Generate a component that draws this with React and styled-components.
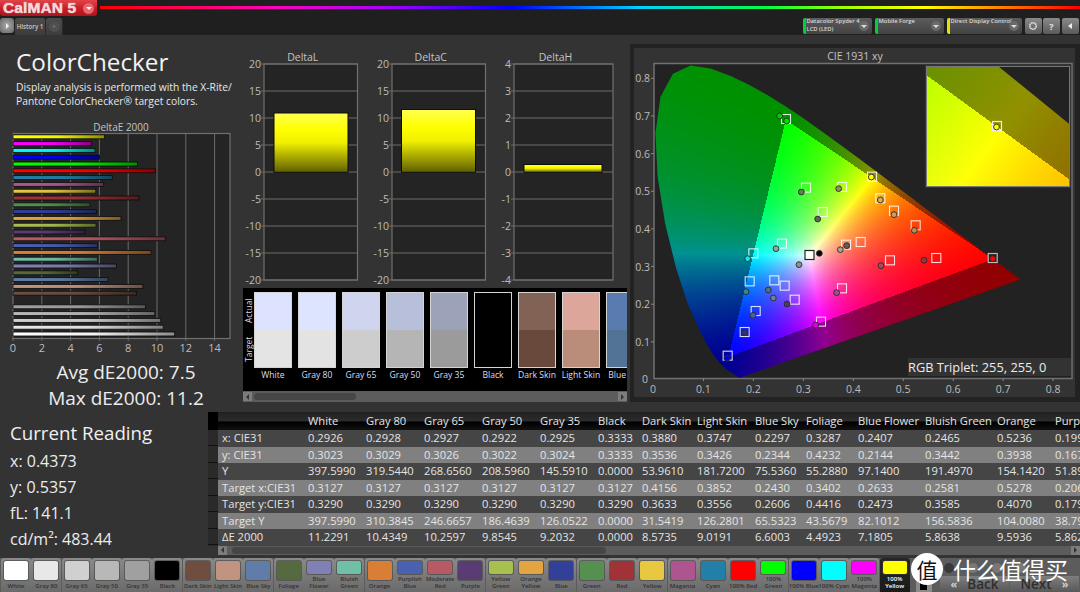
import React, { useEffect, useRef } from 'react';
import styled, { createGlobalStyle } from 'styled-components';

const Global = createGlobalStyle`
  html, body { margin: 0; padding: 0; background: #333; }
  body { font-family: "Open Sans", "Liberation Sans", sans-serif; }
  * { box-sizing: border-box; }
`;

const patches = [
  ['White', '#ffffff', 11.23], ['Gray 80', '#e8e8e8', 10.43], ['Gray 65', '#d0d0d0', 10.26], ['Gray 50', '#b8b8b8', 9.85], ['Gray 35', '#a0a0a0', 9.2],
  ['Black', '#000000', 0], ['Dark Skin', '#6f4e40', 8.57], ['Light Skin', '#c09480', 9.02], ['Blue Sky', '#5f7da8', 6.6], ['Foliage', '#556b3f', 4.49],
  ['Blue Flower', '#8080b5', 7.18], ['Bluish Green', '#70c0a8', 5.86], ['Orange', '#d87f35', 9.59], ['Purplish Blue', '#4a60b0', 5.86], ['Moderate Red', '#b85a65', 10.6],
  ['Purple', '#5a3c75', 5.0], ['Yellow Green', '#a8c050', 5.77], ['Orange Yellow', '#e2a53f', 7.5], ['Blue', '#32409a', 5.8], ['Green', '#559050', 5.35],
  ['Red', '#a03238', 8.75], ['Yellow', '#e8c840', 5.75], ['Magenta', '#ae5590', 6.3], ['Cyan', '#2280a8', 6.9], ['100% Red', '#ff0000', 9.9],
  ['100% Green', '#00ff00', 8.65], ['100% Blue', '#0000ff', 6.0], ['100% Cyan', '#00ffff', 5.7], ['100% Magenta', '#ff00ff', 5.45], ['100% Yellow', '#ffff00', 6.35],
];
const twoLine = new Set(['Blue Flower', 'Bluish Green', 'Purplish Blue', 'Moderate Red', 'Yellow Green', 'Orange Yellow', '100% Green', '100% Magenta', '100% Yellow']);

const swatches = [
  ['White', '#dde3ff', '#e4e4e4'], ['Gray 80', '#dde4ff', '#e3e3e3'], ['Gray 65', '#d0d5ef', '#cdcdcd'], ['Gray 50', '#b8bfda', '#b5b5b5'],
  ['Gray 35', '#9ca2b8', '#9b9b9b'], ['Black', '#000000', '#000000'], ['Dark Skin', '#826255', '#69493b'], ['Light Skin', '#dca79a', '#ba8c7a'], ['Blue Sky', '#5a7bb0', '#527396'],
];

const columns = [
  { w: 90, h: '', v: ['x: CIE31', 'y: CIE31', 'Y', 'Target x:CIE31', 'Target y:CIE31', 'Target Y', 'ΔE 2000'] },
  { w: 58, h: 'White', v: ['0.2926', '0.3023', '397.5990', '0.3127', '0.3290', '397.5990', '11.2291'] },
  { w: 58, h: 'Gray 80', v: ['0.2928', '0.3029', '319.5440', '0.3127', '0.3290', '310.3845', '10.4349'] },
  { w: 58, h: 'Gray 65', v: ['0.2927', '0.3026', '268.6560', '0.3127', '0.3290', '246.6657', '10.2597'] },
  { w: 58, h: 'Gray 50', v: ['0.2922', '0.3022', '208.5960', '0.3127', '0.3290', '186.4639', '9.8545'] },
  { w: 58, h: 'Gray 35', v: ['0.2925', '0.3024', '145.5910', '0.3127', '0.3290', '126.0522', '9.2032'] },
  { w: 44, h: 'Black', v: ['0.3333', '0.3333', '0.0000', '0.3127', '0.3290', '0.0000', '0.0000'] },
  { w: 55, h: 'Dark Skin', v: ['0.3880', '0.3536', '53.9610', '0.4156', '0.3633', '31.5419', '8.5735'] },
  { w: 58, h: 'Light Skin', v: ['0.3747', '0.3426', '181.7200', '0.3852', '0.3556', '126.2801', '9.0191'] },
  { w: 51, h: 'Blue Sky', v: ['0.2297', '0.2344', '75.5360', '0.2430', '0.2606', '65.5323', '6.6003'] },
  { w: 52, h: 'Foliage', v: ['0.3287', '0.4232', '55.2880', '0.3402', '0.4416', '43.5679', '4.4923'] },
  { w: 67, h: 'Blue Flower', v: ['0.2407', '0.2144', '97.1400', '0.2633', '0.2473', '82.1012', '7.1805'] },
  { w: 72, h: 'Bluish Green', v: ['0.2465', '0.3442', '191.4970', '0.2581', '0.3585', '156.5836', '5.8638'] },
  { w: 58, h: 'Orange', v: ['0.5236', '0.3938', '154.1420', '0.5278', '0.4070', '104.0080', '9.5936'] },
  { w: 60, h: 'Purple', v: ['0.1996', '0.1679', '51.8990', '0.2061', '0.1792', '38.7914', '5.8621'] },
];

const locus = [[.1741,.005],[.174,.005],[.1738,.0049],[.1736,.0049],[.1733,.0048],[.173,.0048],[.1726,.0048],[.1721,.0048],[.1714,.0051],[.1703,.0058],[.1689,.0069],[.1669,.0086],[.1644,.0109],[.1611,.0138],[.1566,.0177],[.151,.0227],[.144,.0297],[.1355,.0399],[.1241,.0578],[.1096,.0868],[.0913,.1327],[.0687,.2007],[.0454,.295],[.0235,.4127],[.0082,.5384],[.0039,.6548],[.0139,.7502],[.0389,.812],[.0743,.8338],[.1142,.8262],[.1547,.8059],[.1929,.7816],[.2296,.7543],[.2658,.7243],[.3016,.6923],[.3373,.6589],[.3731,.6245],[.4087,.5896],[.4441,.5547],[.4788,.5202],[.5125,.4866],[.5448,.4544],[.5752,.4242],[.6029,.3965],[.627,.3725],[.6482,.3514],[.6658,.334],[.6801,.3197],[.6915,.3083],[.7006,.2993],[.7079,.292],[.714,.2859],[.719,.2809],[.723,.277],[.726,.274],[.73,.27],[.7347,.2653]];

const PANEL_X = 634, PANEL_Y = 48;
const sx = (x) => 653.5 + x * 499.5;
const sy = (y) => 379.5 - y * 376.5;

function xyColor(x, y) {
  const X = x / y, Z = (1 - x - y) / y;
  let r = 2.4934969 * X - 0.9313836 - 0.4027108 * Z;
  let g = -0.829489 * X + 1.7626641 + 0.0236247 * Z;
  let b = 0.0358458 * X - 0.0761724 + 0.9568845 * Z;
  const outside = r < 0 || g < 0 || b < 0;
  r = Math.max(r, 0); g = Math.max(g, 0); b = Math.max(b, 0);
  const m = Math.max(r, g, b) || 1;
  const k = outside ? 0.57 : 1;
  const f = (v) => Math.round(255 * k * Math.pow(v / m, 1.2));
  return [f(r), f(g), f(b)];
}

function paintGamut(ctx, left, top, w, h, toX, toY, pathFn) {
  const off = document.createElement('canvas');
  off.width = w; off.height = h;
  const octx = off.getContext('2d');
  const img = octx.createImageData(w, h);
  for (let j = 0; j < h; j++) {
    for (let i = 0; i < w; i++) {
      const x = Math.max(toX(i + left + 0.5), 0.001);
      const y = Math.max(toY(j + top + 0.5), 0.001);
      const c = xyColor(x, y);
      const p = (j * w + i) * 4;
      img.data[p] = c[0]; img.data[p + 1] = c[1]; img.data[p + 2] = c[2]; img.data[p + 3] = 255;
    }
  }
  octx.putImageData(img, 0, 0);
  ctx.save();
  ctx.beginPath();
  ctx.rect(left, top, w, h);
  ctx.clip();
  ctx.beginPath();
  pathFn();
  ctx.closePath();
  ctx.clip();
  ctx.drawImage(off, left, top);
  ctx.restore();
}

function GamutCanvas() {
  const ref = useRef(null);
  useEffect(() => {
    const ctx = ref.current.getContext('2d');
    paintGamut(ctx, 20, 15, 418, 318, (px) => (px + PANEL_X - 653.5) / 499.5, (py) => (379.5 - py - PANEL_Y) / 376.5, () => {
      locus.forEach(([x, y], i) => {
        const a = sx(x) - PANEL_X, b = sy(y) - PANEL_Y;
        if (i) ctx.lineTo(a, b); else ctx.moveTo(a, b);
      });
    });
    // zoomed inset
    const ix = 927 - PANEL_X, iy = 67 - PANEL_Y, iw = 142, ih = 119;
    ctx.fillStyle = '#333';
    ctx.fillRect(ix - 2, iy - 2, iw + 4, ih + 4);
    ctx.strokeStyle = '#777';
    ctx.strokeRect(ix - 0.5, iy - 0.5, iw + 1, ih + 1);
    ctx.fillStyle = '#222';
    ctx.fillRect(ix, iy, iw, ih);
    const zx = 2980, zy = 2440, cx = 997.5 - PANEL_X, cy = 126 - PANEL_Y, x0 = 0.4365, y0 = 0.5375;
    paintGamut(ctx, ix, iy, iw, ih, (px) => x0 + (px - cx) / zx, (py) => y0 - (py - cy) / zy, () => {
      locus.forEach(([x, y], i) => {
        const a = cx + (x - x0) * zx, b = cy - (y - y0) * zy;
        if (i) ctx.lineTo(a, b); else ctx.moveTo(a, b);
      });
    });
  }, []);
  return <GamutLayer ref={ref} width={441} height={349} />;
}

const z5 = (x, y) => [630 + x / 3, 40 + y / 3];
const z6 = (x, y) => [630 + x / 3, 210 + y / 3];
const squares = [
  z5(468, 237), z5(528, 443), z5(636, 441), z5(726, 410), z5(751, 475), z5(792, 512), z5(578, 516),
  z6(919, 144), z6(780, 151), z6(692, 96), z6(648, 104), z6(636, 235), z6(573, 335), z6(494, 269), z6(464, 227), z6(433, 211),
  z6(359, 214), z6(377, 303), z6(344, 366), z6(293, 437), z6(370, 130), z6(456, 101), z6(857, 46),
];
const points = [
  [z5(449, 228), '#00d000'], [z5(470, 243), '#00e000'], [z5(514, 456), '#5f7f50'], [z5(626, 446), '#90905a'], [z5(724, 411), '#ffff00'], [z5(751, 480), '#dcae50'], [z6(792, 14), '#d0a050'], [z6(563, 27), '#606850'],
  [z6(1088, 146), '#ff0000'], [z6(882, 151), '#a03040'], [z6(753, 167), '#a05060'], [z6(650, 107), '#6a5a50'], [z6(631, 119), '#b0a090'], [z6(620, 248), '#a04f90'], [z6(557, 345), '#e000e0'],
  [z6(471, 282), '#503a60'], [z6(430, 264), '#6f7f9a'], [z6(415, 240), '#507090'], [z6(348, 245), '#308a90'], [z6(369, 316), '#4f5fa0'], [z6(344, 368), '#303080'], [z6(291, 445), '#0000e0'],
  [z6(353, 146), '#00f0f0'], [z6(438, 116), '#80b0a0'], [z6(507, 164), '#909090'], [z6(568, 130), '#000000'], [z6(853, 61), '#b89050'],
];

const Page = styled.div`
  position: relative;
  width: 1080px;
  height: 592px;
  overflow: hidden;
  display: flex;
  flex-direction: column;
  background: #333;
  color: #e6e6e6;
`;
const TopBar = styled.header`
  height: 35px;
  flex: none;
  background: #1f1f1f;
  display: flex;
  flex-direction: column;
`;
const LogoRow = styled.div`
  height: 18px;
  display: flex;
  align-items: flex-start;
`;
const Logo = styled.div`
  width: 97px;
  height: 16px;
  background: linear-gradient(#e2444a, #c81d25 55%, #a8161c);
  border-radius: 0 0 3px 3px;
  display: flex;
  align-items: center;
  padding-left: 3px;
  justify-content: space-between;
  padding-right: 3px;
`;
const LogoText = styled.span`
  font-family: "Liberation Sans", sans-serif;
  font-weight: 700;
  font-size: 15.5px;
  line-height: 16px;
  letter-spacing: 0.1px;
  color: #f0d8d8;
  text-shadow: 0 0 1px #fff;
`;
const LogoArrow = styled.span`
  width: 11px;
  height: 11px;
  border-radius: 50%;
  background: #e8656a;
  display: flex;
  align-items: center;
  justify-content: center;
  &::after {
    content: "";
    border: 3px solid transparent;
    border-top: 3px solid #fff;
    margin-top: 3px;
  }
`;
const Rainbow = styled.div`
  flex: 1;
  height: 3px;
  margin: 6px 0 0 3px;
  background: linear-gradient(90deg, #ff0000 0%, #ff00c0 18%, #a000ff 30%, #0000ff 42%, #00d0ff 55%, #00ff40 68%, #a0ff00 76%, #ffff00 84%, #ff8000 92%, #ff0000 100%);
`;
const ToolRow = styled.div`
  height: 17px;
  display: flex;
  align-items: flex-start;
`;
const PlayBtn = styled.div`
  width: 14px;
  height: 15px;
  border-radius: 3px;
  background: radial-gradient(circle, #aaa, #666);
  display: flex;
  align-items: center;
  justify-content: center;
  &::after {
    content: "";
    border: 3px solid transparent;
    border-left: 3px solid #eee;
    margin-left: 3px;
  }
`;
const Tab = styled.div`
  height: 17px;
  width: ${(p) => p.$w}px;
  background: linear-gradient(#4c4c4c, #3c3c3c);
  border-radius: 3px 3px 0 0;
  border-right: 1px solid #2a2a2a;
  margin-left: ${(p) => p.$ml || 0}px;
  font-size: 6.2px;
  line-height: 17px;
  font-weight: 600;
  color: #c8c8c8;
  text-align: center;
`;
const Plus = styled.span`
  display: inline-block;
  width: 11px;
  height: 11px;
  margin-top: 3px;
  border-radius: 50%;
  background: #4f4f4f;
  line-height: 11px;
  color: #888;
`;
const Spacer = styled.div`
  flex: 1;
`;
const Selector = styled.div`
  width: ${(p) => p.$w}px;
  height: 16px;
  margin-right: 3px;
  border-radius: 2px;
  background: linear-gradient(#5c5c5c, #434343);
  border-left: 3px solid ${(p) => p.$c};
  padding: 0 0 0 1px;
  font-size: 5.8px;
  font-weight: 600;
  line-height: 7.8px;
  color: #d8d8d8;
  position: relative;
  white-space: nowrap;
  &::after {
    content: "";
    position: absolute;
    right: 3px;
    top: 3px;
    width: 10px;
    height: 10px;
    border-radius: 50%;
    background: #6a6a6a;
  }
  &::before {
    content: "";
    position: absolute;
    right: 5px;
    top: 7px;
    z-index: 1;
    border: 3px solid transparent;
    border-top: 3px solid #ddd;
  }
`;
const IconBtn = styled.div`
  width: 17px;
  height: 16px;
  margin-right: 1.5px;
  border-radius: 2px;
  background: linear-gradient(#8a8a8a, #5a5a5a);
  display: flex;
  align-items: center;
  justify-content: center;
  font-size: 9px;
  font-weight: 700;
  color: #e4e4e4;
`;
const Main = styled.main`
  flex: 1;
  display: flex;
  flex-direction: column;
  min-height: 0;
`;
const Upper = styled.section`
  height: 375px;
  display: grid;
  grid-template-columns: 240px 390px 450px;
`;
const LeftCol = styled.div`
  padding-top: 12px;
`;
const Title = styled.h1`
  margin: 0 0 0 16px;
  height: 30px;
  font-size: 24.3px;
  line-height: 30px;
  font-weight: 400;
  color: #f2f2f2;
`;
const Desc = styled.p`
  margin: 3px 0 12px 16px;
  font-size: 10.3px;
  line-height: 14px;
  color: #e8e8e8;
  white-space: nowrap;
`;
const ChartSvg = styled.svg`
  display: block;
  font-family: "Open Sans", sans-serif;
  font-size: 11px;
  flex: none;
`;
const Stat = styled.div`
  padding-left: 12px;
  text-align: center;
  font-size: 19px;
  line-height: 26px;
  color: #ededed;
  &:first-of-type { margin-top: 5px; }
`;
const CenterCol = styled.div`
  padding-top: 13px;
  display: flex;
  flex-direction: column;
`;
const DeltaRow = styled.div`
  display: flex;
  height: 240px;
`;
const SwatchPanel = styled.div`
  margin-left: 3px;
  width: 384px;
  background: #000;
  display: flex;
  flex-direction: column;
`;
const SwatchRow = styled.div`
  height: 103px;
  display: flex;
  padding-top: 4px;
  overflow: hidden;
`;
const SideLabels = styled.div`
  width: 11px;
  flex: none;
  height: 76px;
  display: flex;
  flex-direction: column;
`;
const SideLabel = styled.span`
  height: 38px;
  writing-mode: vertical-rl;
  transform: rotate(180deg);
  text-align: center;
  font-size: 8.5px;
  line-height: 11px;
  color: #ddd;
`;
const Swatch = styled.div`
  flex: none;
  width: 38px;
  margin-right: 6px;
`;
const SwatchBox = styled.div`
  height: 76px;
  border: 1px solid #d4d4d4;
  display: flex;
  flex-direction: column;
`;
const SwatchHalf = styled.div`
  flex: 1;
  background: ${(p) => p.$c};
`;
const SwatchName = styled.div`
  margin: 2px -4px 0;
  text-align: center;
  font-size: 8.6px;
  line-height: 11px;
  color: #dde;
  white-space: nowrap;
`;
const ScrollBar = styled.div`
  height: ${(p) => p.$h}px;
  margin-left: ${(p) => p.$ml || 0}px;
  background: #5c5c5c;
  display: flex;
  align-items: center;
  justify-content: space-between;
  flex: none;
`;
const ScrollThumb = styled.div`
  width: ${(p) => p.$w}px;
  height: 7px;
  margin-left: ${(p) => p.$ml}px;
  margin-right: auto;
  border-radius: 4px;
  background: #464646;
`;
const ScrollArrow = styled.span`
  width: 9px;
  height: 9px;
  flex: none;
  background: #7c7c7c;
  display: flex;
  align-items: center;
  justify-content: center;
  &::after {
    content: "";
    border: 3px solid transparent;
    ${(p) => (p.$dir === 'left' ? 'border-right: 3px solid #333; margin-right: 3px;' : 'border-left: 3px solid #333; margin-left: 3px;')}
  }
`;
const RightCol = styled.div`
  padding-top: 9px;
`;
const CieOuter = styled.div`
  height: 358px;
  background: #222;
  padding: 4px 5px 5px 4px;
`;
const CieInner = styled.div`
  position: relative;
  width: 441px;
  height: 349px;
  background: #333;
`;
const GamutLayer = styled.canvas`
  position: absolute;
  left: 0;
  top: 0;
`;
const MarkerLayer = styled.svg`
  position: absolute;
  left: 0;
  top: 0;
`;
const Triplet = styled.div`
  position: absolute;
  left: 274px;
  top: 310px;
  width: 163px;
  height: 18px;
  padding-left: 0;
  background: #333;
  font-size: 12.8px;
  line-height: 18px;
  color: #ececec;
  white-space: nowrap;
`;
const Lower = styled.section`
  height: 145px;
  display: flex;
`;
const Readings = styled.div`
  width: 208px;
  flex: none;
  padding: 10px 0 0 10px;
`;
const ReadingTitle = styled.h2`
  margin: 0 0 2px;
  font-size: 18.7px;
  line-height: 26px;
  font-weight: 400;
  color: #f0f0f0;
`;
const ReadingLine = styled.div`
  font-size: 16px;
  line-height: 26px;
  color: #ececec;
`;
const TableWrap = styled.div`
  flex: 1;
  min-width: 0;
  padding-top: 2px;
  display: flex;
  flex-direction: column;
`;
const TableRow = styled.div`
  display: flex;
  height: 133.5px;
  flex: none;
`;
const Strip = styled.div`
  width: 10px;
  flex: none;
  background: repeating-linear-gradient(#2a2a2a 0, #2a2a2a 15.5px, #111 15.5px, #111 16.5px);
  border-top: 18px solid #000;
`;
const DataTable = styled.table`
  table-layout: fixed;
  width: 854px;
  border-collapse: collapse;
  font-size: 11.2px;
  line-height: 13px;
  color: #e4e4e4;
  height: 133.5px;
`;
const HeadCell = styled.th`
  height: 18px;
  padding: 0 0 1px ${(p) => (p.$first ? 4 : 0)}px;
  background: linear-gradient(#202020, #2c2c2c 50%, #000 55%, #111);
  font-weight: 400;
  text-align: left;
  white-space: nowrap;
  overflow: hidden;
`;
const DataRow = styled.tr`
  background: ${(p) => (p.$light ? '#808080' : '#454545')};
`;
const DataCell = styled.td`
  height: 16.5px;
  padding: 0 0 1px ${(p) => (p.$first ? 4 : 0)}px;
  white-space: nowrap;
  overflow: hidden;
`;
const BottomBar = styled.footer`
  height: 37px;
  flex: none;
  display: flex;
  background: #5c5c5c;
  border-top: 3px solid #333;
`;
const Tiles = styled.div`
  display: flex;
  padding-left: 1px;
  flex: none;
`;
const Tile = styled.div`
  width: 30px;
  margin-right: 0.3px;
  height: 34px;
  border-radius: 3px 3px 0 0;
  background: ${(p) => (p.$active ? 'linear-gradient(#262626, #1a1a1a)' : 'linear-gradient(#8a8a8a, #6a6a6a)')};
  display: flex;
  flex-direction: column;
  align-items: center;
  padding-top: 3px;
  overflow: hidden;
`;
const TileColor = styled.div`
  width: 24px;
  height: ${(p) => (p.$two ? 13 : 19)}px;
  flex: none;
  border-radius: 2px;
  background: ${(p) => p.$c};
  box-shadow: 0 0 0 1px rgba(60, 60, 60, 0.55);
`;
const TileName = styled.div`
  font-size: 6px;
  line-height: 7px;
  margin-top: ${(p) => (p.$two ? 2 : 3)}px;
  font-weight: 600;
  width: 29px;
  flex: none;
  text-align: center;
  white-space: ${(p) => (p.$two ? 'normal' : 'nowrap')};
  display: flex;
  justify-content: center;
  flex-wrap: ${(p) => (p.$two ? 'wrap' : 'nowrap')};
  color: ${(p) => (p.$active ? '#fff' : '#333')};
`;
const Controls = styled.div`
  flex: 1;
  display: flex;
  flex-direction: column;
  justify-content: flex-end;
`;
const MediaRow = styled.div`
  display: flex;
  align-items: center;
  gap: 14px;
  height: 14px;
  margin-bottom: 1px;
  padding-left: 34px;
`;
const MediaDot = styled.span`
  width: 10px;
  height: 10px;
  border-radius: 50%;
  background: #777;
  &:first-child { background: #3a3a3a; }
`;
const ControlRow = styled.div`
  display: flex;
  align-items: flex-end;
  height: 16px;
`;
const StopBtn = styled.div`
  width: 16px;
  height: 12px;
  margin: 0 8px 0 6px;
  border-radius: 3px 3px 0 0;
  background: #8a8a8a;
  display: flex;
  justify-content: center;
  padding-top: 3px;
  &::after {
    content: "";
    width: 7px;
    height: 7px;
    background: #000;
  }
`;
const NavBtn = styled.div`
  flex: 1;
  height: 16px;
  margin-right: 1px;
  background: linear-gradient(#7e7e7e, #585858);
  display: flex;
  align-items: center;
  justify-content: center;
  gap: 10px;
  font-size: 13.5px;
  font-weight: 600;
  color: #2e2e2e;
  line-height: 16px;
`;
const NavIcon = styled.span`
  font-size: 11px;
  color: #ccc;
  font-weight: 700;
`;
const Watermark = styled.div`
  position: absolute;
  left: 911px;
  top: 553px;
  display: flex;
  align-items: center;
  gap: 10px;
`;
const WatermarkMark = styled.div`
  width: 32px;
  height: 32px;
  border-radius: 50%;
  background: #fff;
  color: #111;
  display: flex;
  align-items: center;
  justify-content: center;
  font-family: "Noto Sans CJK SC", sans-serif;
  font-size: 21px;
  line-height: 32px;
`;
const WatermarkText = styled.div`
  font-family: "Noto Sans CJK SC", sans-serif;
  color: #fff;
  font-size: 23px;
  line-height: 32px;
  white-space: nowrap;
`;

function DeltaChart({ title, labels, px, pw, barX, barW, barTop, width, id }) {
  const top = 16, step = 27;
  const zero = top + step * 4 + 0.3;
  return (
    <ChartSvg width={width} height={240} viewBox={`0 0 ${width} 240`}>
      <defs>
        <linearGradient id={id} x1="0" y1="0" x2="0" y2="1">
          <stop offset="0" stopColor="#ffff50" />
          <stop offset="0.28" stopColor="#ffff00" />
          <stop offset="0.5" stopColor="#f0f000" />
          <stop offset="1" stopColor="#5e5e00" />
        </linearGradient>
      </defs>
      <text x={px + pw / 2 - 8} y={12.5} textAnchor="middle" fill="#c4c4c4" fontSize="10.5">{title}</text>
      <rect x={px} y={top} width={pw} height={216} fill="#242424" stroke="#707070" strokeWidth="1.2" />
      {labels.map((l, i) => (
        <g key={l}>
          <line x1={px - 3} x2={px + pw} y1={top + i * step} y2={top + i * step} stroke="#6c6c6c" strokeWidth="1" />
          <text x={px - 3} y={top + i * step + 4} textAnchor="end" fill="#bdbdbd" fontSize="10.5">{l}</text>
        </g>
      ))}
      <rect x={barX} y={barTop} width={barW} height={zero - barTop} fill={`url(#${id})`} stroke="#0c0c0c" strokeWidth="1" />
    </ChartSvg>
  );
}

function DeltaE() {
  const y0 = 13, x = (v) => 13 + v * 14.4;
  const rows = [...patches].reverse();
  return (
    <ChartSvg width={240} height={234} viewBox="0 120 240 234">
      <defs>
        <linearGradient id="barShade" x1="0" y1="0" x2="1" y2="0">
          <stop offset="0" stopColor="#000" stopOpacity="0" />
          <stop offset="0.5" stopColor="#000" stopOpacity="0.05" />
          <stop offset="1" stopColor="#000" stopOpacity="0.45" />
        </linearGradient>
      </defs>
      <text x={121} y={131} textAnchor="middle" fill="#c4c4c4" fontSize="10">DeltaE 2000</text>
      <rect x={13} y={133.5} width={217} height={205} fill="#242424" stroke="#707070" strokeWidth="1.2" />
      {[2, 4, 6, 8, 10, 12, 14].map((v) => (
        <line key={v} x1={x(v)} x2={x(v)} y1={133.5} y2={338.5} stroke="#6c6c6c" strokeWidth="1" />
      ))}
      {[0, 2, 4, 6, 8, 10, 12, 14].map((v) => (
        <g key={v}>
          <line x1={x(v)} x2={x(v)} y1={338.5} y2={341} stroke="#6c6c6c" />
          <text x={x(v)} y={352} textAnchor="middle" fill="#bdbdbd" fontSize="11">{v}</text>
        </g>
      ))}
      {rows.map(([name, c, de], i) =>
        de > 0 ? (
          <g key={name}>
            <rect x={y0} y={134.8 + i * 6.8} width={de * 14.4} height={4} fill={c} stroke="#111" strokeWidth="0.9" />
            <rect x={y0} y={134.8 + i * 6.8} width={de * 14.4} height={4} fill="url(#barShade)" />
          </g>
        ) : null
      )}
    </ChartSvg>
  );
}

function CieBase() {
  const xs = [0.1, 0.2, 0.3, 0.4, 0.5, 0.6, 0.7, 0.8];
  const ys = [0.1, 0.2, 0.3, 0.4, 0.5, 0.6, 0.7, 0.8];
  return (
    <ChartSvg width={441} height={349} viewBox={`${PANEL_X} ${PANEL_Y} 441 349`}>
      <text x={855} y={59.5} textAnchor="middle" fill="#c4c4c4" fontSize="10.5">CIE 1931 xy</text>
      <rect x={654} y={63.5} width={418} height={315} fill="#222" stroke="#707070" strokeWidth="1.5" />
      <text x={653} y={393} textAnchor="middle" fill="#bdbdbd" fontSize="10.5">0</text>
      <text x={648} y={383} textAnchor="end" fill="#bdbdbd" fontSize="10.5">0</text>
      {xs.map((v) => (
        <g key={v}>
          <line x1={sx(v)} x2={sx(v)} y1={378} y2={381} stroke="#888" />
          <text x={sx(v)} y={393} textAnchor="middle" fill="#bdbdbd" fontSize="10.5">{v}</text>
        </g>
      ))}
      {ys.map((v) => (
        <g key={v}>
          <line x1={651} x2={654} y1={sy(v)} y2={sy(v)} stroke="#888" />
          <text x={650} y={sy(v) + 4} textAnchor="end" fill="#bdbdbd" fontSize="10.5">{v}</text>
        </g>
      ))}
    </ChartSvg>
  );
}

function CieMarkers() {
  return (
    <MarkerLayer width={441} height={349} viewBox={`${PANEL_X} ${PANEL_Y} 441 349`}>
      {squares.map(([x, y], i) => (
        <rect key={i} x={x - 4.5} y={y - 4.5} width={9} height={9} fill="none" stroke="#fff" strokeOpacity="0.85" strokeWidth="1.1" />
      ))}
      <rect x={805} y={250.5} width={9} height={9} fill="#fff" stroke="#222" strokeWidth="1.2" />
      <rect x={992.5} y={121.5} width={9} height={9} fill="none" stroke="#eee" strokeWidth="1.2" />
      <rect x={988.2} y={253.5} width={9} height={9} fill="#222" stroke="#bbb" strokeWidth="1.2" />
      {points.map(([[x, y], c], i) => (
        <circle key={i} cx={x} cy={y} r={2.9} fill={c} stroke="#2a2a2a" strokeWidth="0.9" />
      ))}
      <circle cx={996.5} cy={127} r={2.9} fill="#ffff00" stroke="#2a2a2a" strokeWidth="0.9" />
    </MarkerLayer>
  );
}

export default function App() {
  return (
    <Page>
      <Global />
      <TopBar>
        <LogoRow>
          <Logo>
            <LogoText>CalMAN 5</LogoText>
            <LogoArrow />
          </Logo>
          <Rainbow />
        </LogoRow>
        <ToolRow>
          <PlayBtn />
          <Tab $w={31} $ml={1}>History 1</Tab>
          <Tab $w={17}><Plus>+</Plus></Tab>
          <Spacer />
          <Selector $w={69} $c="#00d040">Datacolor Spyder 4<br />LCD (LED)</Selector>
          <Selector $w={69} $c="#00d040">Mobile Forge</Selector>
          <Selector $w={75} $c="#e8e000">Direct Display Control</Selector>
          <IconBtn>
            <svg width="10" height="10" viewBox="0 0 10 10"><circle cx="5" cy="5" r="3.2" fill="none" stroke="#ddd" strokeWidth="1.6" strokeDasharray="1.6 0.5" /></svg>
          </IconBtn>
          <IconBtn>?</IconBtn>
          <IconBtn>
            <svg width="8" height="8" viewBox="0 0 8 8"><path d="M6 1 L2 4 L6 7 Z" fill="#eee" /></svg>
          </IconBtn>
        </ToolRow>
      </TopBar>
      <Main>
        <Upper>
          <LeftCol>
            <Title>ColorChecker</Title>
            <Desc>
              Display analysis is performed with the X-Rite/<br />
              Pantone ColorChecker® target colors.
            </Desc>
            <DeltaE />
            <Stat>Avg dE2000: 7.5</Stat>
            <Stat>Max dE2000: 11.2</Stat>
          </LeftCol>
          <CenterCol>
            <DeltaRow>
              <DeltaChart id="gL" title="DeltaL" width={126} labels={['20', '15', '10', '5', '0', '-5', '-10', '-15', '-20']} px={24} pw={93.5} barX={34} barW={74} barTop={65} />
              <DeltaChart id="gC" title="DeltaC" width={128} labels={['20', '15', '10', '5', '0', '-5', '-10', '-15', '-20']} px={26} pw={93.5} barX={35.5} barW={74} barTop={61.5} />
              <DeltaChart id="gH" title="DeltaH" width={136} labels={['4', '3', '2', '1', '0', '-1', '-2', '-3', '-4']} px={20} pw={99} barX={30} barW={78} barTop={116.5} />
            </DeltaRow>
            <SwatchPanel>
              <SwatchRow>
                <SideLabels>
                  <SideLabel>Actual</SideLabel>
                  <SideLabel>Target</SideLabel>
                </SideLabels>
                {swatches.map(([n, a, t]) => (
                  <Swatch key={n}>
                    <SwatchBox>
                      <SwatchHalf $c={a} />
                      <SwatchHalf $c={t} />
                    </SwatchBox>
                    <SwatchName>{n}</SwatchName>
                  </Swatch>
                ))}
              </SwatchRow>
              <ScrollBar $h={11}>
                <ScrollArrow $dir="left" />
                <ScrollThumb $w={102} $ml={2} />
                <ScrollArrow $dir="right" />
              </ScrollBar>
            </SwatchPanel>
          </CenterCol>
          <RightCol>
            <CieOuter>
              <CieInner>
                <CieBase />
                <GamutCanvas />
                <CieMarkers />
                <Triplet>RGB Triplet: 255, 255, 0</Triplet>
              </CieInner>
            </CieOuter>
          </RightCol>
        </Upper>
        <Lower>
          <Readings>
            <ReadingTitle>Current Reading</ReadingTitle>
            <ReadingLine>x: 0.4373</ReadingLine>
            <ReadingLine>y: 0.5357</ReadingLine>
            <ReadingLine>fL: 141.1</ReadingLine>
            <ReadingLine>cd/m²: 483.44</ReadingLine>
          </Readings>
          <TableWrap>
            <TableRow>
              <Strip />
              <DataTable>
                <colgroup>
                  {columns.map((c, i) => <col key={i} width={c.w} />)}
                </colgroup>
                <thead>
                  <tr>
                    {columns.map((c, i) => <HeadCell key={i} $first={i === 0}>{c.h}</HeadCell>)}
                  </tr>
                </thead>
                <tbody>
                  {columns[0].v.map((_, r) => (
                    <DataRow key={r} $light={r % 2 === 1}>
                      {columns.map((c, i) => <DataCell key={i} $first={i === 0}>{c.v[r]}</DataCell>)}
                    </DataRow>
                  ))}
                </tbody>
              </DataTable>
            </TableRow>
            <ScrollBar $h={9.5} $ml={10}>
              <ScrollArrow $dir="left" />
              <ScrollThumb $w={374} $ml={5} />
              <ScrollArrow $dir="right" />
            </ScrollBar>
          </TableWrap>
        </Lower>
      </Main>
      <BottomBar>
        <Tiles>
          {patches.map(([n, c], i) => (
            <Tile key={n} $active={i === patches.length - 1}>
              <TileColor $c={c} $two={twoLine.has(n)} />
              <TileName $two={twoLine.has(n)} $active={i === patches.length - 1}>
                {twoLine.has(n) ? <span>{n}</span> : n}
              </TileName>
            </Tile>
          ))}
        </Tiles>
        <Controls>
          <MediaRow>
            <MediaDot />
            <MediaDot />
            <MediaDot />
            <MediaDot />
          </MediaRow>
          <ControlRow>
            <StopBtn />
            <NavBtn><NavIcon>«</NavIcon>Back</NavBtn>
            <NavBtn>Next<NavIcon>»</NavIcon></NavBtn>
          </ControlRow>
        </Controls>
      </BottomBar>
      <Watermark>
        <WatermarkMark>值</WatermarkMark>
        <WatermarkText>什么值得买</WatermarkText>
      </Watermark>
    </Page>
  );
}
